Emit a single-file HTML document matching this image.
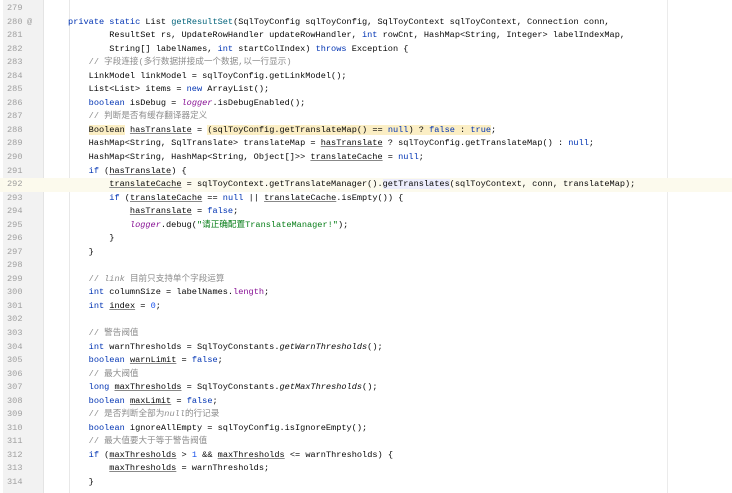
<!DOCTYPE html>
<html><head><meta charset="utf-8"><style>
body{margin:0;width:732px;height:493px;background:#fff;overflow:hidden;position:relative;font-family:"Liberation Mono","Noto Sans CJK SC",monospace;font-size:8.6px;color:#080808}
.g{position:absolute;left:3px;top:0;width:40px;height:493px;background:#f2f2f2;border-right:1px solid #e4e4e4}
.rm{position:absolute;left:667px;top:0;width:1px;height:493px;background:#ebebeb}
.l{position:absolute;left:0;width:732px;height:13.54px;line-height:13.54px;white-space:pre}
.n{position:absolute;left:7px;color:#a0a0a0;font-size:8.6px}
.c{position:absolute;left:47.4px}
.k{color:#0033b3}.cm{color:#8c8c8c}.cm i{font-style:italic}.m{color:#00627a}.p{color:#871094}.pi{color:#871094;font-style:italic}.s{color:#067d17}.num{color:#1750eb}
.u{text-decoration:underline;text-decoration-color:#888}
.y{background:#fbeec4}.cur{background:#fcfaed}.h{background:#ededfc}
.ig{position:absolute;width:1px;background:#e8e8e8}
</style></head><body>
<div class="g"></div><div class="rm"></div>
<div class="ig" style="left:69px;top:0;height:493px"></div>
<div class="l" style="top:2px"><span class="n">279</span></div>
<div class="l" style="top:15.5px"><span class="n">280</span><span class="n" style="left:27px">@</span><span class="c">    <span class="k">private static</span> List <span class="m">getResultSet</span>(SqlToyConfig sqlToyConfig, SqlToyContext sqlToyContext, Connection conn,</span></div>
<div class="l" style="top:29.1px"><span class="n">281</span><span class="c">            ResultSet rs, UpdateRowHandler updateRowHandler, <span class="k">int</span> rowCnt, HashMap&lt;String, Integer&gt; labelIndexMap,</span></div>
<div class="l" style="top:42.6px"><span class="n">282</span><span class="c">            String[] labelNames, <span class="k">int</span> startColIndex) <span class="k">throws</span> Exception {</span></div>
<div class="l" style="top:56.2px"><span class="n">283</span><span class="c">        <span class="cm">// 字段连接(多行数据拼接成一个数据,以一行显示)</span></span></div>
<div class="l" style="top:69.7px"><span class="n">284</span><span class="c">        LinkModel linkModel = sqlToyConfig.getLinkModel();</span></div>
<div class="l" style="top:83.2px"><span class="n">285</span><span class="c">        List&lt;List&gt; items = <span class="k">new</span> ArrayList();</span></div>
<div class="l" style="top:96.8px"><span class="n">286</span><span class="c">        <span class="k">boolean</span> isDebug = <span class="pi">logger</span>.isDebugEnabled();</span></div>
<div class="l" style="top:110.3px"><span class="n">287</span><span class="c">        <span class="cm">// 判断是否有缓存翻译器定义</span></span></div>
<div class="l" style="top:123.9px"><span class="n">288</span><span class="c">        <span class="y">Boolean</span> <span class="u">hasTranslate</span> = <span class="y">(sqlToyConfig.getTranslateMap() == <span class="k">null</span>) ? <span class="k">false</span> : <span class="k">true</span></span>;</span></div>
<div class="l" style="top:137.4px"><span class="n">289</span><span class="c">        HashMap&lt;String, SqlTranslate&gt; translateMap = <span class="u">hasTranslate</span> ? sqlToyConfig.getTranslateMap() : <span class="k">null</span>;</span></div>
<div class="l" style="top:151px"><span class="n">290</span><span class="c">        HashMap&lt;String, HashMap&lt;String, Object[]&gt;&gt; <span class="u">translateCache</span> = <span class="k">null</span>;</span></div>
<div class="l" style="top:164.5px"><span class="n">291</span><span class="c">        <span class="k">if</span> (<span class="u">hasTranslate</span>) {</span></div>
<div class="l cur" style="top:178px"><span class="n">292</span><span class="c">            <span class="u">translateCache</span> = sqlToyContext.getTranslateManager().<span class="h">getTranslates</span>(sqlToyContext, conn, translateMap);</span></div>
<div class="l" style="top:191.6px"><span class="n">293</span><span class="c">            <span class="k">if</span> (<span class="u">translateCache</span> == <span class="k">null</span> || <span class="u">translateCache</span>.isEmpty()) {</span></div>
<div class="l" style="top:205.1px"><span class="n">294</span><span class="c">                <span class="u">hasTranslate</span> = <span class="k">false</span>;</span></div>
<div class="l" style="top:218.7px"><span class="n">295</span><span class="c">                <span class="pi">logger</span>.debug(<span class="s">"请正确配置TranslateManager!"</span>);</span></div>
<div class="l" style="top:232.2px"><span class="n">296</span><span class="c">            }</span></div>
<div class="l" style="top:245.7px"><span class="n">297</span><span class="c">        }</span></div>
<div class="l" style="top:259.3px"><span class="n">298</span></div>
<div class="l" style="top:272.8px"><span class="n">299</span><span class="c">        <span class="cm">// <i>link</i> 目前只支持单个字段运算</span></span></div>
<div class="l" style="top:286.4px"><span class="n">300</span><span class="c">        <span class="k">int</span> columnSize = labelNames.<span class="p">length</span>;</span></div>
<div class="l" style="top:299.9px"><span class="n">301</span><span class="c">        <span class="k">int</span> <span class="u">index</span> = <span class="num">0</span>;</span></div>
<div class="l" style="top:313.4px"><span class="n">302</span></div>
<div class="l" style="top:327px"><span class="n">303</span><span class="c">        <span class="cm">// 警告阀值</span></span></div>
<div class="l" style="top:340.5px"><span class="n">304</span><span class="c">        <span class="k">int</span> warnThresholds = SqlToyConstants.<i>getWarnThresholds</i>();</span></div>
<div class="l" style="top:354.1px"><span class="n">305</span><span class="c">        <span class="k">boolean</span> <span class="u">warnLimit</span> = <span class="k">false</span>;</span></div>
<div class="l" style="top:367.6px"><span class="n">306</span><span class="c">        <span class="cm">// 最大阀值</span></span></div>
<div class="l" style="top:381.1px"><span class="n">307</span><span class="c">        <span class="k">long</span> <span class="u">maxThresholds</span> = SqlToyConstants.<i>getMaxThresholds</i>();</span></div>
<div class="l" style="top:394.7px"><span class="n">308</span><span class="c">        <span class="k">boolean</span> <span class="u">maxLimit</span> = <span class="k">false</span>;</span></div>
<div class="l" style="top:408.2px"><span class="n">309</span><span class="c">        <span class="cm">// 是否判断全部为<i>null</i>的行记录</span></span></div>
<div class="l" style="top:421.8px"><span class="n">310</span><span class="c">        <span class="k">boolean</span> ignoreAllEmpty = sqlToyConfig.isIgnoreEmpty();</span></div>
<div class="l" style="top:435.3px"><span class="n">311</span><span class="c">        <span class="cm">// 最大值要大于等于警告阀值</span></span></div>
<div class="l" style="top:448.8px"><span class="n">312</span><span class="c">        <span class="k">if</span> (<span class="u">maxThresholds</span> &gt; <span class="num">1</span> &amp;&amp; <span class="u">maxThresholds</span> &lt;= warnThresholds) {</span></div>
<div class="l" style="top:462.4px"><span class="n">313</span><span class="c">            <span class="u">maxThresholds</span> = warnThresholds;</span></div>
<div class="l" style="top:475.9px"><span class="n">314</span><span class="c">        }</span></div>
</body></html>
